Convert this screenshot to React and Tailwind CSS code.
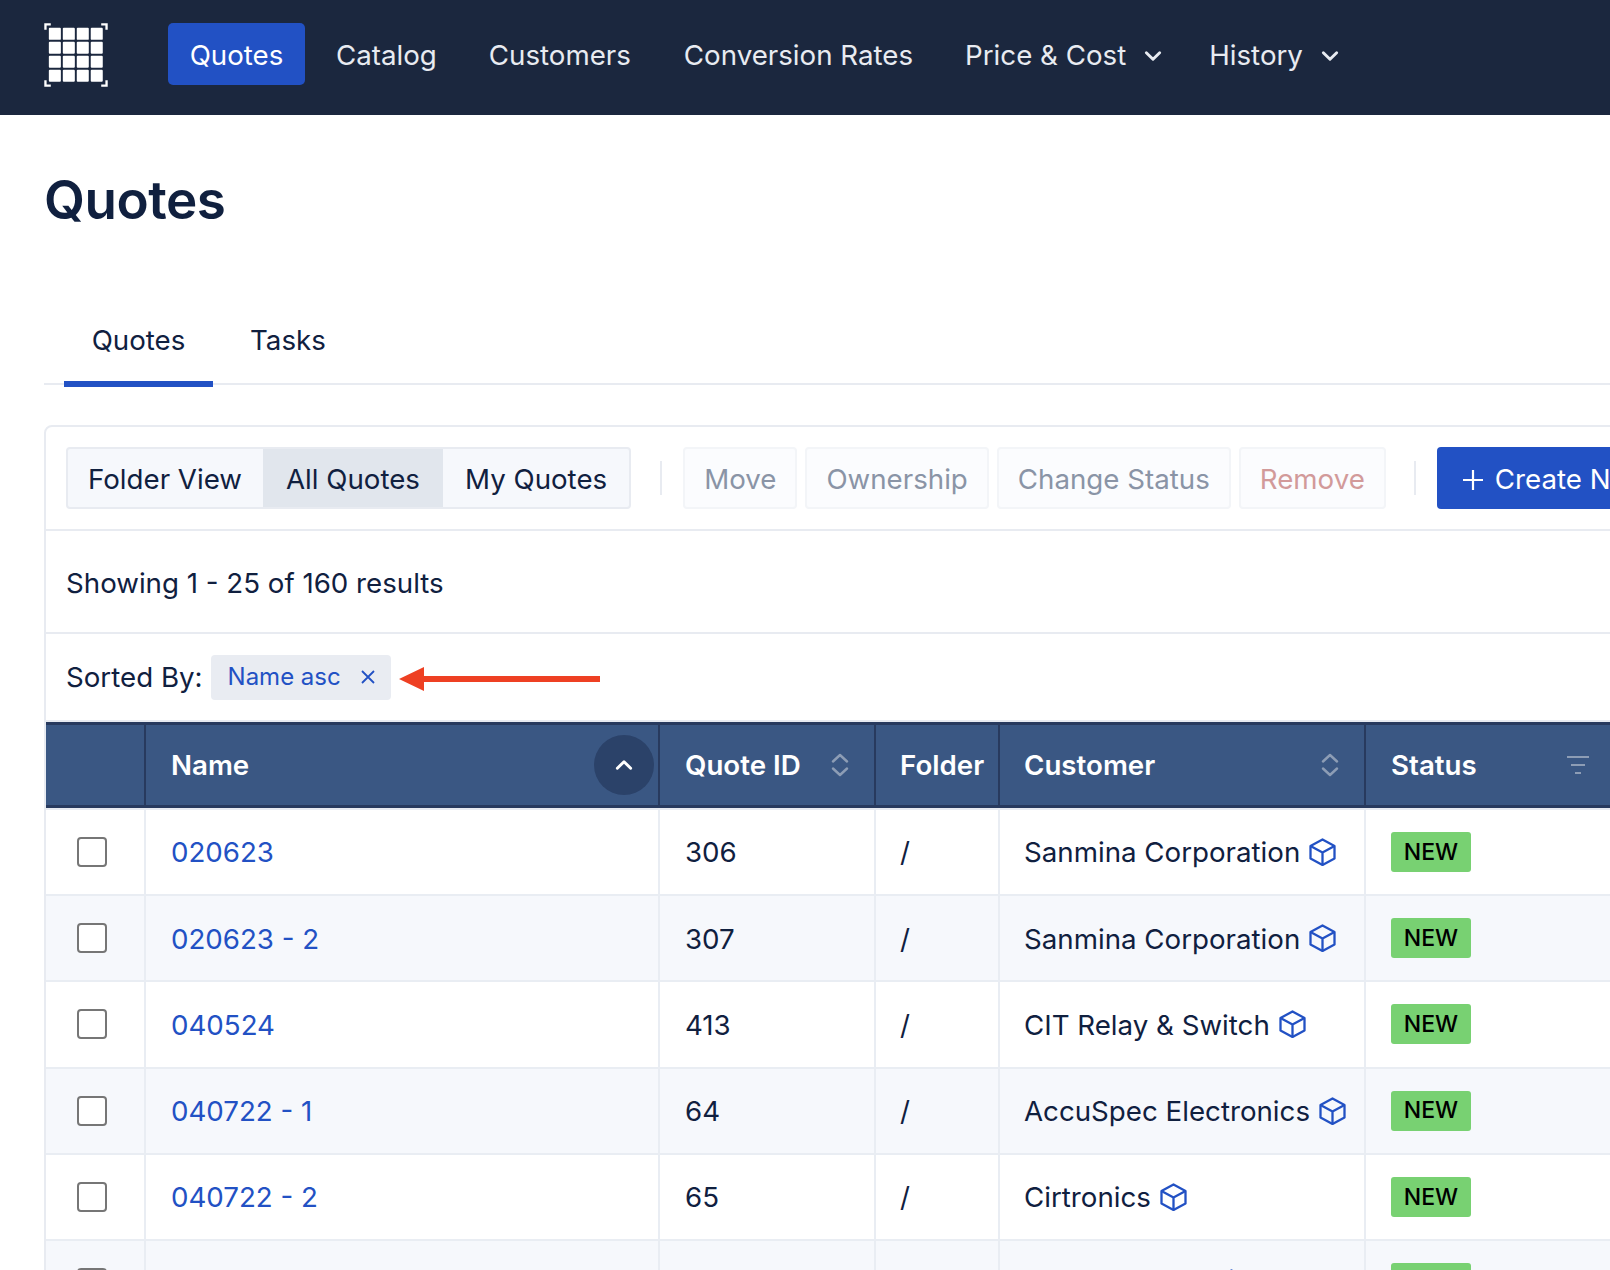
import React from 'react';

const rows = [
  { name: '020623', id: '306', customer: 'Sanmina Corporation' },
  { name: '020623 - 2', id: '307', customer: 'Sanmina Corporation' },
  { name: '040524', id: '413', customer: 'CIT Relay & Switch' },
  { name: '040722 - 1', id: '64', customer: 'AccuSpec Electronics' },
  { name: '040722 - 2', id: '65', customer: 'Cirtronics' },
  { name: '040722 - 3', id: '66', customer: 'Sanmina Corp' },
];

const cols = 'grid grid-cols-[100px_514px_216px_124px_366px_400px]';

const Chevron = ({ className }) => (
  <svg className={className} viewBox="0 0 18 18" fill="none" stroke="currentColor" strokeWidth="2.6" strokeLinecap="round" strokeLinejoin="round">
    <path d="M3 6l6 6 6-6" />
  </svg>
);

const Cube = () => (
  <svg className="w-[27px] h-[28px] shrink-0 text-[#2251c4]" viewBox="0 0 27 28" fill="none" stroke="currentColor" strokeWidth="2.3" strokeLinejoin="round">
    <path d="M13.5 1.5l12 6.5v12.5l-12 6.5-12-6.5V8l12-6.5z" />
    <path d="M1.5 8l12 6.5L25.5 8M13.5 14.5V27" />
  </svg>
);

const SortIcon = () => (
  <svg className="w-[20px] h-[26px] text-[#8d9db5]" viewBox="0 0 20 26" fill="none" stroke="currentColor" strokeWidth="2.4" strokeLinecap="round" strokeLinejoin="round">
    <path d="M3 9.5L10 3l7 6.5M3 16.5l7 6.5 7-6.5" />
  </svg>
);

const Logo = () => (
  <svg className="w-[64px] h-[64px]" viewBox="0 0 66 66" fill="none">
    <path d="M1.5 7V1.5H7M59 1.5h5.5V7M64.5 59v5.5H59M7 64.5H1.5V59" stroke="#fff" strokeWidth="2.4" />
    {[0, 1, 2, 3].map((r) =>
      [0, 1, 2, 3].map((c) => (
        <rect key={`${r}-${c}`} x={5 + c * 14.4} y={5 + r * 14.4} width="12.4" height="12.4" rx="1" fill="#fff" />
      ))
    )}
  </svg>
);

const ActionButton = ({ children, className }) => (
  <button className={`h-[62px] px-[19px] pt-[3px] rounded-[4px] border-2 border-[#f3f5f8] bg-[#fbfcfe] text-[27.7px] ${className}`}>
    {children}
  </button>
);

const NavItem = ({ children, dropdown, className }) => (
  <a className={`flex items-center h-[62px] pt-[3px] text-[27.7px] text-[#e8ebf1] ${className}`}>
    {children}
    {dropdown && <Chevron className="w-[20px] h-[20px] ml-[17px]" />}
  </a>
);

export default function App() {
  return (
    <div className="w-[1610px] h-[1270px] overflow-hidden bg-white text-[#10203f] font-['Inter',sans-serif]">
      <nav className="h-[115px] bg-[#1b273e] flex items-start pt-[23px] pl-[44px]">
        <Logo />
        <a className="ml-[60px] h-[62px] w-[137px] pt-[3px] flex items-center justify-center rounded-[5px] bg-[#2251c4] text-white text-[27.7px]">
          Quotes
        </a>
        <NavItem className="ml-[31px]">Catalog</NavItem>
        <NavItem className="ml-[52px]">Customers</NavItem>
        <NavItem className="ml-[53px]">Conversion Rates</NavItem>
        <NavItem className="ml-[52px]" dropdown>Price &amp; Cost</NavItem>
        <NavItem className="ml-[46px]" dropdown>History</NavItem>
      </nav>

      <div className="pl-[44px]">
        <h1 className="mt-[53px] text-[53px] leading-[64px] font-semibold tracking-[-0.5px]">Quotes</h1>

        <div className="mt-[65px] flex h-[88px] border-b-2 border-[#e8ebf1] relative">
          <div className="ml-[20px] w-[149px] h-[90px] border-b-[6px] border-[#2251c4] flex items-center justify-center pt-[4px] text-[27.7px]">
            Quotes
          </div>
          <div className="ml-[37px] h-[88px] flex items-center text-[27.7px]">Tasks</div>
        </div>

        <div className="mt-[40px] w-[1800px] border-2 border-[#e8ebf1] rounded-tl-[8px]">
          <div className="h-[104px] flex items-center pl-[20px] border-b-2 border-[#e8ebf1]">
            <div className="flex h-[62px] rounded-[4px] border-2 border-[#e8ebf1] bg-[#f6f8fc] text-[27.7px]">
              <button className="pl-[20px] pr-[21px] pt-[3px]">Folder View</button>
              <button className="px-[23px] pt-[3px] bg-[#e1e6ed]">All Quotes</button>
              <button className="px-[22px] pt-[3px]">My Quotes</button>
            </div>
            <div className="ml-[29px] mr-[21px] w-[2px] h-[34px] bg-[#e8ebf1]" />
            <div className="flex gap-[8px]">
              <ActionButton className="text-[#8a94a6]">Move</ActionButton>
              <ActionButton className="text-[#8a94a6]">Ownership</ActionButton>
              <ActionButton className="text-[#8a94a6]">Change Status</ActionButton>
              <ActionButton className="text-[#d29a9a]">Remove</ActionButton>
            </div>
            <div className="ml-[28px] mr-[21px] w-[2px] h-[34px] bg-[#e8ebf1]" />
            <button className="h-[62px] pl-[26px] pr-[26px] pt-[3px] rounded-[4px] bg-[#2251c4] text-white text-[27.7px] flex items-center">
              <svg className="w-[20px] h-[20px] mr-[12px]" viewBox="0 0 20 20" fill="none" stroke="currentColor" strokeWidth="2.2">
                <path d="M10 0v20M0 10h20" />
              </svg>
              Create New
            </button>
          </div>

          <div className="h-[103px] flex items-center pl-[20px] pt-[4px] border-b-2 border-[#e8ebf1] text-[27.7px]">
            Showing 1 - 25 of 160 results
          </div>

          <div className="h-[86px] flex items-center pl-[20px] text-[27.7px] relative">
            <span className="mt-[1px]">Sorted By:</span>
            <span className="ml-[8px] h-[45px] w-[180px] flex items-center pl-[17px] rounded-[4px] bg-[#e9ecf2] text-[#2251c4] text-[24px]">
              Name asc
              <svg className="w-[14px] h-[14px] ml-[20px]" viewBox="0 0 14 14" fill="none" stroke="currentColor" strokeWidth="1.8">
                <path d="M1 1l12 12M13 1L1 13" />
              </svg>
            </span>
            <svg className="absolute left-[353px] top-[32px] w-[201px] h-[26px]" viewBox="0 0 201 26" fill="#ee4023">
              <path d="M0 13L25 1v9h176v6H25v9z" />
            </svg>
          </div>

          <div className={`${cols} h-[90px] border-y-2 border-[#e8ebf1]`}>
            <div className="col-span-6 grid grid-cols-subgrid bg-[#3a5783] border-y-[3px] border-[#283a5e] text-white text-[27.7px] font-semibold">
              <div className="border-r-2 border-[#283a5e]" />
              <div className="border-r-2 border-[#283a5e] pl-[25px] pr-[4px] flex items-center justify-between">
                <span className="pt-[2px]">Name</span>
                <span className="w-[60px] h-[60px] rounded-full bg-[#2b4269] flex items-center justify-center">
                  <Chevron className="w-[20px] h-[20px] rotate-180" />
                </span>
              </div>
              <div className="border-r-2 border-[#283a5e] pl-[25px] pr-[24px] flex items-center justify-between">
                <span className="pt-[2px]">Quote ID</span>
                <SortIcon />
              </div>
              <div className="border-r-2 border-[#283a5e] pl-[24px] pt-[2px] flex items-center">Folder</div>
              <div className="border-r-2 border-[#283a5e] pl-[24px] pr-[24px] flex items-center justify-between">
                <span className="pt-[2px]">Customer</span>
                <SortIcon />
              </div>
              <div className="pl-[25px] flex items-center">
                <span className="pt-[2px]">Status</span>
                <svg className="w-[22px] h-[20px] ml-[90px] text-[#8d9db5]" viewBox="0 0 22 20" fill="none" stroke="currentColor" strokeWidth="2">
                  <path d="M0 2h22M4 10h14M8 18h6" />
                </svg>
              </div>
            </div>
          </div>

          {rows.map((row, i) => (
            <div key={row.name} className={`${cols} h-[86.2px] border-b-2 border-[#e9edf3] text-[27.7px] ${i % 2 ? 'bg-[#f6f8fc]' : 'bg-white'}`}>
              <div className="border-r-2 border-[#e9edf3] flex items-center pl-[31px]">
                <span className="w-[30px] h-[30px] rounded-[4px] border-2 border-[#767676] bg-white" />
              </div>
              <div className="border-r-2 border-[#e9edf3] flex items-center pl-[25px] pt-[2px] text-[#2251c4]">{row.name}</div>
              <div className="border-r-2 border-[#e9edf3] flex items-center pl-[25px] pt-[2px]">{row.id}</div>
              <div className="border-r-2 border-[#e9edf3] flex items-center pl-[24px] pt-[2px]">/</div>
              <div className="border-r-2 border-[#e9edf3] flex items-center pl-[24px] gap-[9px]">
                <span className="pt-[2px]">{row.customer}</span>
                <Cube />
              </div>
              <div className="flex items-center pl-[25px]">
                <span className="w-[80px] h-[40px] rounded-[3px] bg-[#78d172] text-black text-[23px] font-medium flex items-center justify-center">NEW</span>
              </div>
            </div>
          ))}
        </div>
      </div>
    </div>
  );
}
